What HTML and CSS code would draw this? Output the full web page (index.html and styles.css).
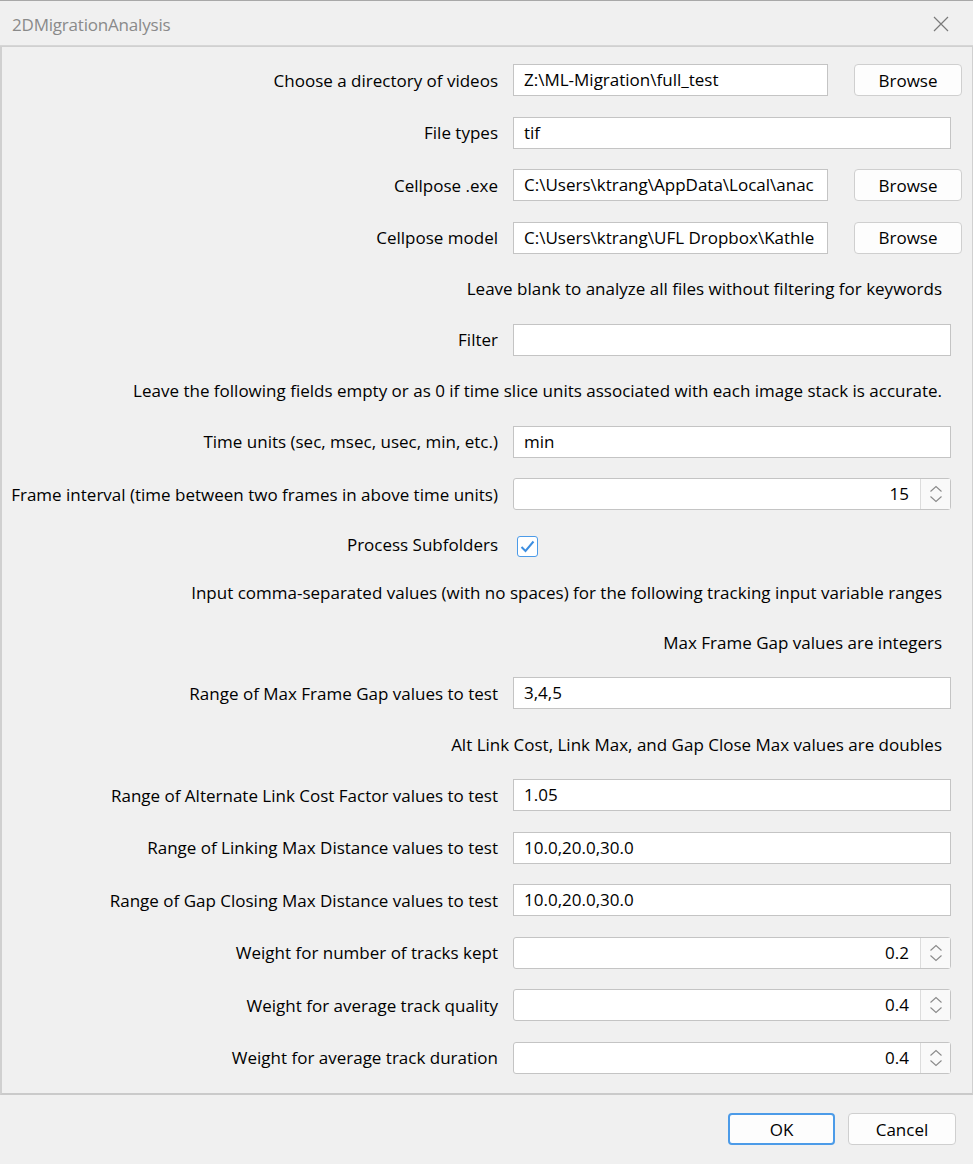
FILE: index.html
```html
<!DOCTYPE html>
<html>
<head>
<meta charset="utf-8">
<link rel="stylesheet" href="styles.css">
</head>
<body>
<div class="window">
  <div class="titlebar">
    <span class="title">2DMigrationAnalysis</span>
    <svg class="close" width="16" height="16" viewBox="0 0 16 16"><path d="M1 1 L15 15 M15 1 L1 15" stroke="#7a7a7a" stroke-width="1.2" fill="none"/></svg>
  </div>
  <div class="panel">
    <div class="row">
      <label class="lbl">Choose a directory of videos</label>
      <div class="field browse-field"><div class="input">Z:\ML-Migration\full_test</div><button class="btn">Browse</button></div>
    </div>
    <div class="row">
      <label class="lbl">File types</label>
      <div class="field"><div class="input">tif</div></div>
    </div>
    <div class="row">
      <label class="lbl">Cellpose .exe</label>
      <div class="field browse-field"><div class="input">C:\Users\ktrang\AppData\Local\anac</div><button class="btn">Browse</button></div>
    </div>
    <div class="row">
      <label class="lbl">Cellpose model</label>
      <div class="field browse-field"><div class="input">C:\Users\ktrang\UFL Dropbox\Kathle</div><button class="btn">Browse</button></div>
    </div>
    <div class="note">Leave blank to analyze all files without filtering for keywords</div>
    <div class="row">
      <label class="lbl">Filter</label>
      <div class="field"><div class="input"></div></div>
    </div>
    <div class="note">Leave the following fields empty or as 0 if time slice units associated with each image stack is accurate.</div>
    <div class="row">
      <label class="lbl">Time units (sec, msec, usec, min, etc.)</label>
      <div class="field"><div class="input">min</div></div>
    </div>
    <div class="row">
      <label class="lbl">Frame interval (time between two frames in above time units)</label>
      <div class="field"><div class="spin"><div class="spin-val">15</div><div class="spin-btn"><svg width="14" height="20" viewBox="0 0 14 20"><path d="M1.5 7.5 L7 2.5 L12.5 7.5 M1.5 12.5 L7 17.5 L12.5 12.5" stroke="#8a8a8a" stroke-width="1.1" fill="none"/></svg></div></div></div>
    </div>
    <div class="row check-row">
      <label class="lbl">Process Subfolders</label>
      <div class="field"><span class="checkbox"><svg width="15" height="13" viewBox="0 0 15 13"><path d="M1.5 7 L5.5 11 L13.5 1.5" stroke="#3d8ee0" stroke-width="2" fill="none"/></svg></span></div>
    </div>
    <div class="note">Input comma-separated values (with no spaces) for the following tracking input variable ranges</div>
    <div class="note">Max Frame Gap values are integers</div>
    <div class="row">
      <label class="lbl">Range of Max Frame Gap values to test</label>
      <div class="field"><div class="input">3,4,5</div></div>
    </div>
    <div class="note">Alt Link Cost, Link Max, and Gap Close Max values are doubles</div>
    <div class="row">
      <label class="lbl">Range of Alternate Link Cost Factor values to test</label>
      <div class="field"><div class="input">1.05</div></div>
    </div>
    <div class="row">
      <label class="lbl">Range of Linking Max Distance values to test</label>
      <div class="field"><div class="input">10.0,20.0,30.0</div></div>
    </div>
    <div class="row">
      <label class="lbl">Range of Gap Closing Max Distance values to test</label>
      <div class="field"><div class="input">10.0,20.0,30.0</div></div>
    </div>
    <div class="row">
      <label class="lbl">Weight for number of tracks kept</label>
      <div class="field"><div class="spin"><div class="spin-val">0.2</div><div class="spin-btn"><svg width="14" height="20" viewBox="0 0 14 20"><path d="M1.5 7.5 L7 2.5 L12.5 7.5 M1.5 12.5 L7 17.5 L12.5 12.5" stroke="#8a8a8a" stroke-width="1.1" fill="none"/></svg></div></div></div>
    </div>
    <div class="row">
      <label class="lbl">Weight for average track quality</label>
      <div class="field"><div class="spin"><div class="spin-val">0.4</div><div class="spin-btn"><svg width="14" height="20" viewBox="0 0 14 20"><path d="M1.5 7.5 L7 2.5 L12.5 7.5 M1.5 12.5 L7 17.5 L12.5 12.5" stroke="#8a8a8a" stroke-width="1.1" fill="none"/></svg></div></div></div>
    </div>
    <div class="row">
      <label class="lbl">Weight for average track duration</label>
      <div class="field"><div class="spin"><div class="spin-val">0.4</div><div class="spin-btn"><svg width="14" height="20" viewBox="0 0 14 20"><path d="M1.5 7.5 L7 2.5 L12.5 7.5 M1.5 12.5 L7 17.5 L12.5 12.5" stroke="#8a8a8a" stroke-width="1.1" fill="none"/></svg></div></div></div>
    </div>
  </div>
  <div class="footer">
    <button class="btn ok">OK</button>
    <button class="btn cancel">Cancel</button>
  </div>
</div>
</body>
</html>
```
FILE: styles.css
```css
* { box-sizing: border-box; }
html, body { margin: 0; padding: 0; background: #f0f0f0; }
body {
  font-family: "Open Sans", "Noto Sans", "Liberation Sans", sans-serif;
  font-size: 17px;
  color: #000;
  width: 973px;
  height: 1164px;
  overflow: hidden;
}
.window {
  width: 973px;
  height: 1164px;
  border-top: 1px solid #a8a8a8;
  display: flex;
  flex-direction: column;
}
.titlebar {
  height: 45px;
  flex: none;
  display: flex;
  align-items: center;
  justify-content: space-between;
  padding: 3px 24px 0 12px;
  border-bottom: 1px solid #d6d6d6;
}
.title { color: #8a8a8a; font-size: 17px; letter-spacing: -0.2px; }
.close { display: block; margin-top: -2px; }
.panel {
  height: 1049px;
  flex: none;
  border: 1px solid #d0d0d0;
  border-bottom: 2px solid #cacaca;
  border-left: 2px solid #d0d0d0;
  padding: 17px 0 0 8px;
  display: flex;
  flex-direction: column;
  gap: 20.5px;
}
.row {
  display: grid;
  grid-template-columns: 488px 1fr;
  column-gap: 15px;
  align-items: center;
  height: 32px;
}
.check-row { height: 27px; }
.lbl { text-align: right; white-space: nowrap; }
.field { display: flex; align-items: center; }
.input {
  width: 438px;
  height: 32px;
  background: #fff;
  border: 1px solid #c4c4c4;
  padding: 0 10px;
  line-height: 30px;
  white-space: nowrap;
  overflow: hidden;
}
.browse-field .input { width: 315px; }
.btn {
  font-family: inherit;
  font-size: 17px;
  color: #000;
  background: #fdfdfd;
  border: 1px solid #cfcfcf;
  border-radius: 4px;
  height: 32px;
  width: 108px;
  padding: 0;
}
.browse-field .btn { margin-left: 26px; }
.note {
  height: 29px;
  line-height: 29px;
  text-align: right;
  padding-right: 30px;
  white-space: nowrap;
}
.spin {
  width: 438px;
  height: 32px;
  background: #fff;
  border: 1px solid #c4c4c4;
  border-radius: 3px;
  display: flex;
}
.spin-val {
  flex: 1;
  text-align: right;
  padding-right: 11px;
  line-height: 30px;
}
.spin-btn {
  width: 30px;
  border-left: 1px solid #dcdcdc;
  background: #f9f9f9;
  display: flex;
  align-items: center;
  justify-content: center;
}
.spin-btn svg { display: block; }
.checkbox {
  width: 21px;
  height: 21px;
  margin-left: 4px;
  margin-top: 4px;
  border: 1px solid #4c9be8;
  border-radius: 3px;
  background: #fff;
  display: flex;
  align-items: center;
  justify-content: center;
}
.checkbox svg { display: block; }
.footer {
  flex: 1;
  display: flex;
  justify-content: flex-end;
  align-items: flex-start;
  padding: 18px 17px 0 0;
  gap: 13px;
}
.ok { width: 107px; border: 2px solid #4c9be8; }
.cancel { width: 108px; }
```
